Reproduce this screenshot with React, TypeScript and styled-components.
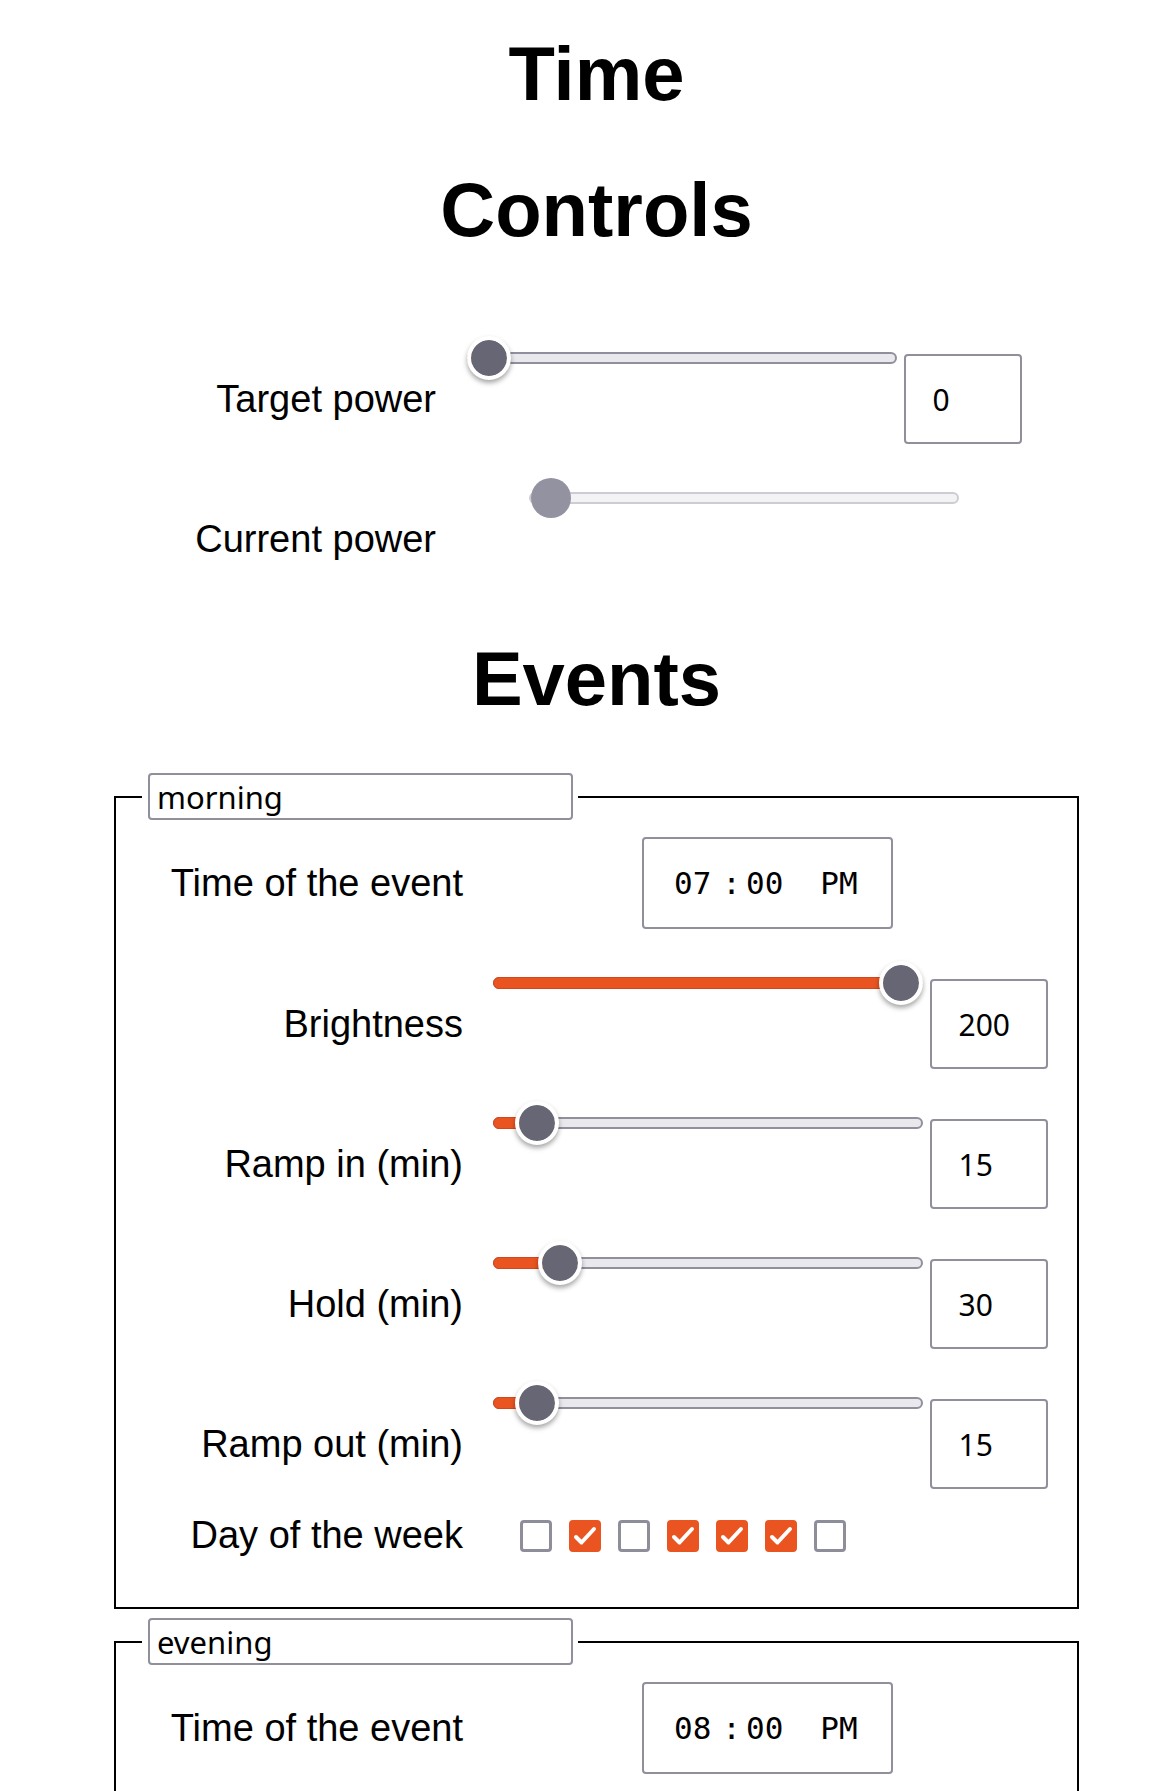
import React from 'react'
import styled, { createGlobalStyle } from 'styled-components'

const GlobalStyle = createGlobalStyle`
  body {
    margin: 0;
    background: #fff;
    color: #000;
    font-family: "Liberation Sans", Arial, sans-serif;
  }
`

const Page = styled.div`
  width: 965px;
  margin-left: 114px;
`

const Heading = styled.h1<{ $narrow?: boolean; $top: number; $bottom: number }>`
  margin: ${p => p.$top}px auto ${p => p.$bottom}px;
  max-width: ${p => (p.$narrow ? '420px' : 'none')};
  font-size: 76px;
  line-height: 136px;
  font-weight: 700;
  text-align: center;
`

const Row = styled.div<{ $label: number; $control: number; $top?: number }>`
  display: grid;
  grid-template-columns: ${p => p.$label}px ${p => p.$control}px;
  align-items: center;
  margin-top: ${p => p.$top ?? 0}px;
`

const Label = styled.div`
  text-align: right;
  font-size: 38px;
  white-space: nowrap;
`

const Control = styled.div<{ $align?: 'center' | 'start'; $tall?: boolean }>`
  display: flex;
  align-items: ${p => (p.$tall ? 'flex-start' : 'center')};
  justify-content: ${p => (p.$align === 'start' ? 'flex-start' : 'center')};
  height: ${p => (p.$tall ? '90px' : 'auto')};
  padding-left: ${p => (p.$align === 'start' ? '57px' : '0')};
`

const SliderWrap = styled.div<{ $width: number }>`
  position: relative;
  flex: none;
  display: flex;
  align-items: center;
  width: ${p => p.$width}px;
  height: 44px;
  margin-top: -18px;
`

const Track = styled.div<{ $disabled?: boolean }>`
  width: 100%;
  height: 12px;
  box-sizing: border-box;
  border-radius: 6px;
  background: ${p => (p.$disabled ? '#f3f3f5' : '#e8e8ed')};
  border: 2px solid ${p => (p.$disabled ? '#cdccd3' : '#908f9c')};
`

const Fill = styled.div`
  position: absolute;
  left: 0;
  top: 16px;
  height: 12px;
  box-sizing: border-box;
  border-radius: 6px 0 0 6px;
  background: #e95420;
  border: 1px solid #d1461a;
`

const Thumb = styled.div<{ $disabled?: boolean }>`
  position: absolute;
  top: 0;
  width: 44px;
  height: 44px;
  box-sizing: border-box;
  border-radius: 50%;
  background: ${p => (p.$disabled ? '#9392a0' : '#676674')};
  background-clip: padding-box;
  border: ${p => (p.$disabled ? '2px solid transparent' : '4px solid #fff')};
  box-shadow: ${p => (p.$disabled ? 'none' : '0 3px 5px rgba(0, 0, 0, 0.35)')};
`

const ValueBox = styled.input`
  flex: none;
  box-sizing: border-box;
  width: 118px;
  height: 90px;
  margin: 0 0 0 7px;
  padding: 0 0 0 27px;
  border: 2px solid #908f9c;
  border-radius: 4px;
  background: #fff;
  color: #000;
  font: 30px "Noto Sans", "Open Sans", sans-serif;
  outline: none;
`

const TimeBox = styled.div`
  box-sizing: border-box;
  width: 251px;
  height: 92px;
  margin-right: 5px;
  display: flex;
  align-items: center;
  padding-left: 30px;
  border: 2px solid #908f9c;
  border-radius: 4px;
  font: 31px "DejaVu Sans Mono", "Liberation Mono", monospace;
  white-space: pre;
`

const TimeSep = styled.span`
  margin: 0 5px 0 11px;
`

const Period = styled.span`
  margin-left: 37px;
`

const Days = styled.div`
  display: flex;
  gap: 17px;
`

const DayBox = styled.span<{ $checked: boolean }>`
  box-sizing: border-box;
  width: 32px;
  height: 32px;
  border-radius: 4px;
  border: 3px solid ${p => (p.$checked ? '#e95420' : '#8e8d9a')};
  background: ${p => (p.$checked ? '#e95420' : '#fff')};
  display: flex;
  align-items: center;
  justify-content: center;

  svg {
    display: block;
  }
`

const EventBox = styled.fieldset`
  margin: 0 0 9px;
  padding: 17px 0 50px 26px;
  border: 2px solid #000;
  min-width: 0;
`

const Legend = styled.legend`
  padding: 0 5px 0 6px;
`

const NameInput = styled.input`
  display: block;
  box-sizing: border-box;
  width: 425px;
  height: 47px;
  margin: 0;
  padding: 0 7px;
  border: 2px solid #908f9c;
  border-radius: 4px;
  background: #fff;
  color: #000;
  font: 31px "Noto Sans", "Open Sans", sans-serif;
  outline: none;
`

type SliderProps = { value: number; max: number; width?: number; disabled?: boolean }

const Slider = ({ value, max, width = 430, disabled }: SliderProps) => {
  const center = 22 + (width - 44) * (value / max)
  return (
    <SliderWrap $width={width}>
      <Track $disabled={disabled} />
      {!disabled && <Fill style={{ width: center }} />}
      <Thumb $disabled={disabled} style={{ left: center - 22 }} />
    </SliderWrap>
  )
}

const Check = () => (
  <svg width="26" height="26" viewBox="0 0 26 26" fill="none">
    <path d="M4 14L9.5 19.5L22 6" stroke="#fff" strokeWidth="4" strokeLinecap="round" strokeLinejoin="round" />
  </svg>
)

const events = [
  {
    name: 'morning',
    hour: '07',
    minute: '00',
    brightness: 200,
    rampIn: 15,
    hold: 30,
    rampOut: 15,
    days: [false, true, false, true, true, true, false],
  },
  {
    name: 'evening',
    hour: '08',
    minute: '00',
    brightness: 120,
    rampIn: 15,
    hold: 30,
    rampOut: 15,
    days: [true, false, false, false, false, false, true],
  },
]

const LABEL = 321
const CONTROL = 614

export default function App() {
  return (
    <>
      <GlobalStyle />
      <Page>
        <Heading $narrow $top={6} $bottom={76}>Time Controls</Heading>

        <Row $label={322} $control={616}>
          <Label>Target power</Label>
          <Control $tall>
            <Slider value={0} max={255} />
            <ValueBox value="0" readOnly />
          </Control>
        </Row>
        <Row $label={322} $control={616} $top={50}>
          <Label>Current power</Label>
          <Control $tall>
            <Slider value={0} max={255} disabled />
          </Control>
        </Row>

        <Heading $top={27} $bottom={26}>Events</Heading>

        {events.map(ev => (
          <EventBox key={ev.name}>
            <Legend>
              <NameInput value={ev.name} readOnly />
            </Legend>
            <Row $label={LABEL} $control={CONTROL}>
              <Label>Time of the event</Label>
              <Control>
                <TimeBox>
                  <span>{ev.hour}</span>
                  <TimeSep>:</TimeSep>
                  <span>{ev.minute}</span>
                  <Period>PM</Period>
                </TimeBox>
              </Control>
            </Row>
            {[
              ['Brightness', ev.brightness, 200],
              ['Ramp in (min)', ev.rampIn, 255],
              ['Hold (min)', ev.hold, 255],
              ['Ramp out (min)', ev.rampOut, 255],
            ].map(([label, value, max]) => (
              <Row key={label as string} $label={LABEL} $control={CONTROL} $top={50}>
                <Label>{label}</Label>
                <Control $tall>
                  <Slider value={value as number} max={max as number} />
                  <ValueBox value={String(value)} readOnly />
                </Control>
              </Row>
            ))}
            <Row $label={LABEL} $control={CONTROL} $top={25}>
              <Label>Day of the week</Label>
              <Control $align="start">
                <Days>
                  {ev.days.map((on, i) => (
                    <DayBox key={i} $checked={on}>{on && <Check />}</DayBox>
                  ))}
                </Days>
              </Control>
            </Row>
          </EventBox>
        ))}
      </Page>
    </>
  )
}
